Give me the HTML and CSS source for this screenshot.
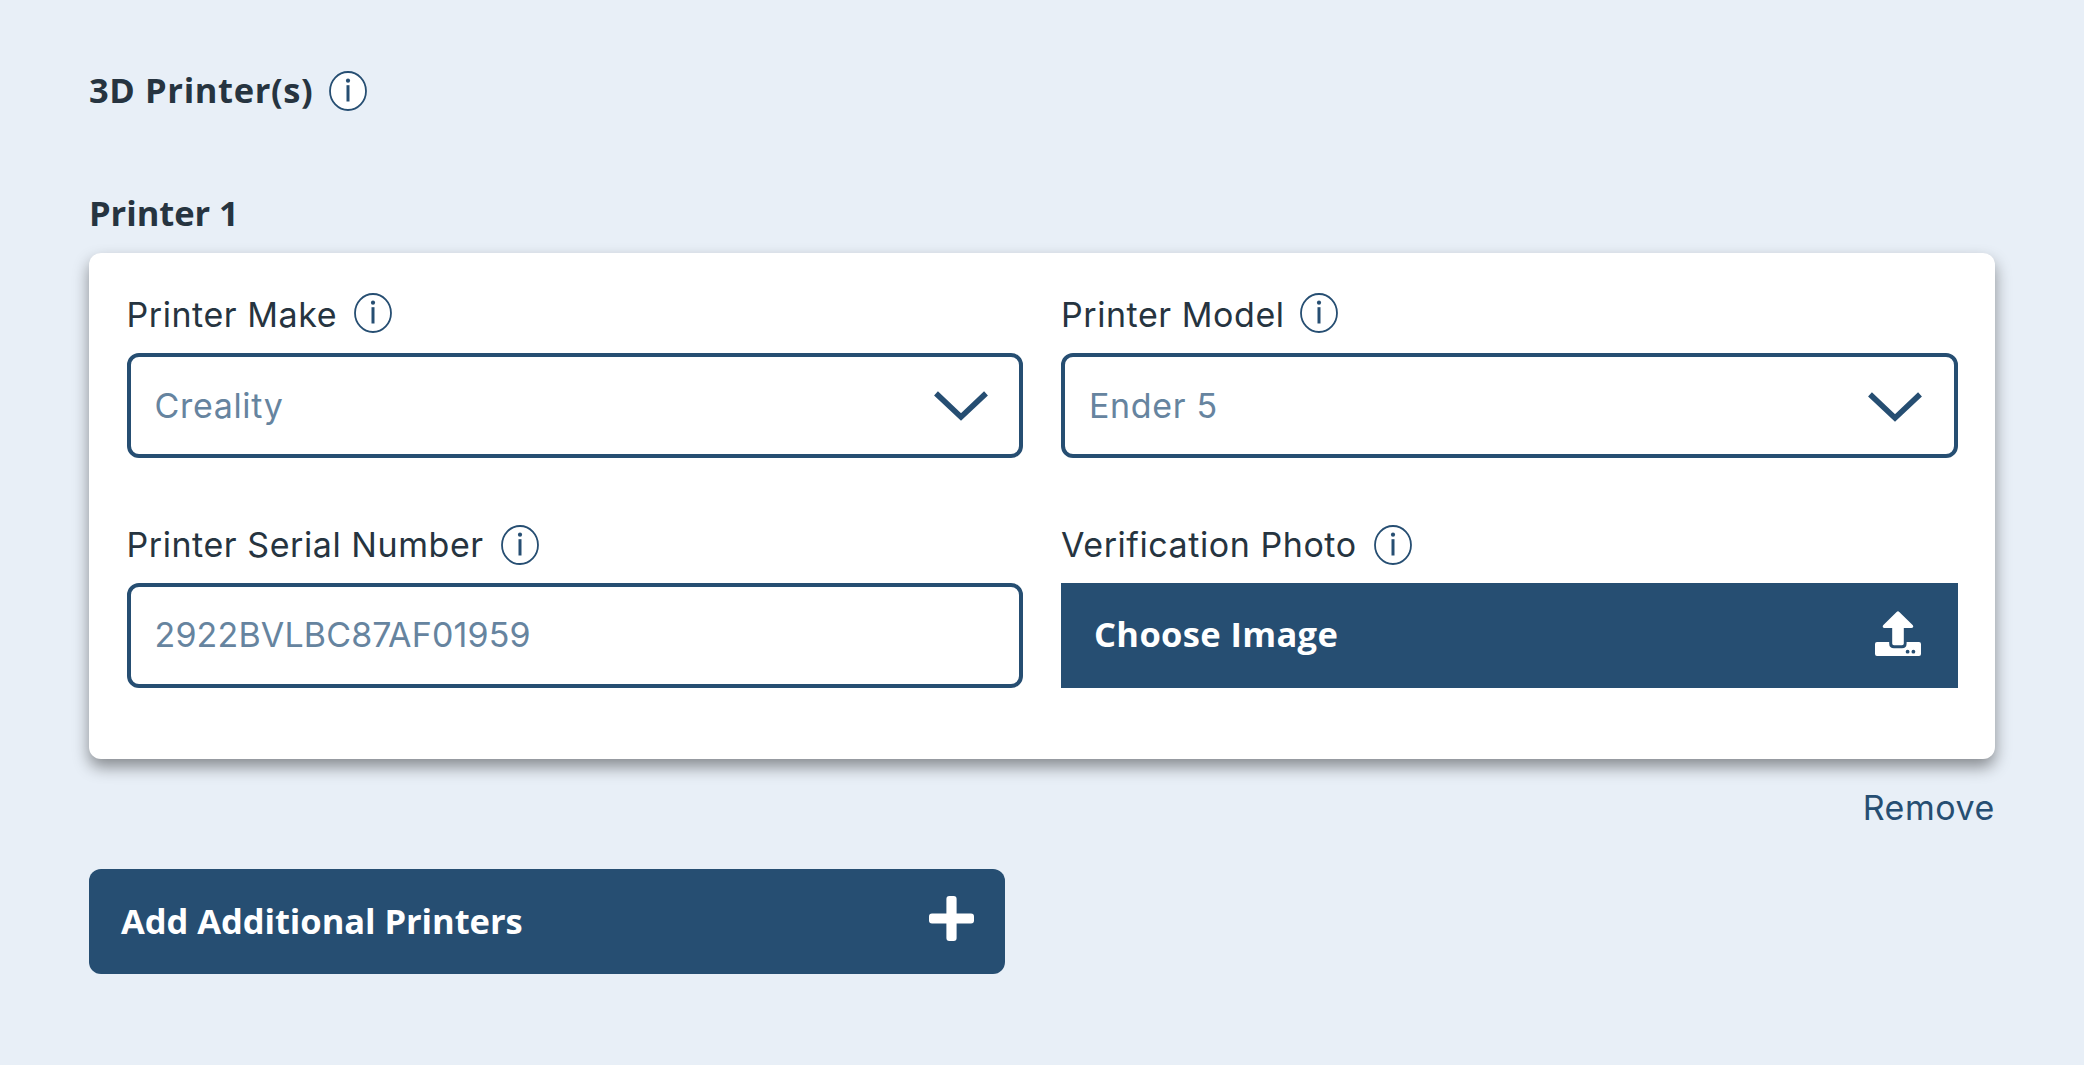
FILE: index.html
```
<!DOCTYPE html>
<html lang="en">
<head>
  <meta charset="utf-8">
  <title>3D Printer(s)</title>
  <link rel="stylesheet" href="styles.css">
</head>
<body>
  <svg width="0" height="0" class="sprite" aria-hidden="true">
    <symbol id="info" viewBox="0 0 38 40">
      <ellipse cx="19" cy="20" rx="18" ry="19" fill="#fff" stroke="#264e72" stroke-width="1.8"/>
      <circle cx="19" cy="9.7" r="2.1" fill="#264e72"/>
      <rect x="17.5" y="14.2" width="3" height="16.3" fill="#264e72"/>
    </symbol>
    <symbol id="chevron" viewBox="0 0 54 30">
      <polyline points="2,2.4 27,26 52,2.4" fill="none" stroke="#264e72" stroke-width="5.6"/>
    </symbol>
  </svg>

  <main class="page">
    <header class="title-row">
      <h1 class="title">3D Printer(s)</h1>
      <svg class="info"><use href="#info"/></svg>
    </header>

    <h2 class="subtitle">Printer 1</h2>

    <section class="card">
      <div class="field">
        <div class="label label-upper"><span>Printer Make</span><svg class="info"><use href="#info"/></svg></div>
        <div class="control select">
          <span class="value">Creality</span>
          <svg class="chevron"><use href="#chevron"/></svg>
        </div>
      </div>
      <div class="field">
        <div class="label label-upper label-model"><span>Printer Model</span><svg class="info"><use href="#info"/></svg></div>
        <div class="control select select-model">
          <span class="value">Ender 5</span>
          <svg class="chevron"><use href="#chevron"/></svg>
        </div>
      </div>
      <div class="field field-lower">
        <div class="label"><span>Printer Serial Number</span><svg class="info"><use href="#info"/></svg></div>
        <div class="control">
          <span class="value serial">2922BVLBC87AF01959</span>
        </div>
      </div>
      <div class="field field-lower">
        <div class="label"><span>Verification Photo</span><svg class="info"><use href="#info"/></svg></div>
        <button class="button choose">
          <span>Choose Image</span>
          <svg class="upload" viewBox="0 0 46 46" fill="#fff">
            <path d="M2 31H14.2V32.5Q14.2 37.2 19 37.2H27Q31.6 37.2 31.6 32.5V31H44Q46 31 46 33V43Q46 45 44 45H2Q0 45 0 43V33Q0 31 2 31Z"/>
            <path d="M21.6 0.9Q23 -0.4 24.3 0.9L37.6 14Q38.6 15.2 38 16.2Q37.6 17 36.4 17H28.8V32.4Q28.8 34.2 27 34.2H19Q17.2 34.2 17.2 32.4V17H9.4Q8.3 17 7.9 16.2Q7.4 15.2 8.4 14Z"/>
            <circle cx="32.6" cy="40.7" r="1.9" fill="#264e72"/>
            <circle cx="38.4" cy="40.7" r="1.9" fill="#264e72"/>
          </svg>
        </button>
      </div>
    </section>

    <a class="remove">Remove</a>

    <button class="button add">
      <span>Add Additional Printers</span>
      <svg class="plus" viewBox="0 0 45 45" fill="#fff">
        <rect x="17.4" y="0" width="10.2" height="45" rx="3"/>
        <rect x="0" y="17.4" width="45" height="10.2" rx="3"/>
      </svg>
    </button>
  </main>
</body>
</html>
```
FILE: styles.css
```
* {
  box-sizing: border-box;
}

body {
  margin: 0;
  background: #e8eff7;
  color: #263440;
  font: 400 34px/40px Inter, "Liberation Sans", sans-serif;
  letter-spacing: 0.56px;
}

.sprite {
  display: block;
}

.page {
  display: flex;
  flex-direction: column;
  padding: 71px 89px 0;
}

.title-row,
.label {
  display: flex;
  align-items: flex-start;
  height: 40px;
  white-space: nowrap;
}

.title-row {
  gap: 16px;
}

.label {
  gap: 17.5px;
}

.label-upper {
  gap: 16.5px;
}

.label-model {
  gap: 15.5px;
}

.label-upper span {
  padding-top: 2px;
}

.title,
.subtitle {
  margin: 0;
  font: 700 34.5px/40px "Open Sans", "Noto Sans", sans-serif;
}

.title {
  line-height: 38px;
  letter-spacing: 0.62px;
}

.subtitle {
  margin-top: 82px;
  letter-spacing: -0.05px;
}

.info {
  width: 38px;
  height: 40px;
  flex: none;
}

.card {
  display: grid;
  grid-template-columns: 1fr 1fr;
  gap: 67px 38px;
  height: 506px;
  margin-top: 20px;
  padding: 40px 37.5px 71px;
  border-radius: 12px;
  background: #fff;
  box-shadow: 0 8px 16px rgba(0, 0, 0, 0.42);
}

.field {
  display: flex;
  flex-direction: column;
  gap: 20px;
}

.field-lower {
  gap: 18px;
}

.control {
  display: flex;
  align-items: center;
  justify-content: space-between;
  height: 105px;
  padding: 0 31.5px 0 24px;
  border: 4px solid #264e72;
  border-radius: 12px;
}

.value {
  color: #66849f;
  letter-spacing: 0.66px;
}

.select .value {
  padding-top: 1px;
}

.value.serial {
  padding-bottom: 2px;
  letter-spacing: 0.15px;
}

.chevron {
  width: 54px;
  height: 30px;
}

.select-model .chevron {
  margin-top: 2px;
}

.button {
  display: flex;
  align-items: center;
  justify-content: space-between;
  height: 105px;
  border: 0;
  background: #264e72;
  color: #fff;
  font: 700 34.5px/40px "Open Sans", "Noto Sans", sans-serif;
}

.choose {
  padding: 0 36.5px 0 33px;
  letter-spacing: 0.36px;
}

.choose span {
  padding-bottom: 4px;
}

.upload {
  width: 46px;
  height: 46px;
  margin-bottom: 3px;
}

.remove {
  align-self: flex-end;
  margin-top: 29px;
  color: #264e72;
}

.add {
  width: 916px;
  margin-top: 41px;
  padding: 0 31px 0 32px;
  border-radius: 12px;
  letter-spacing: -0.06px;
}

.add span {
  padding-bottom: 1px;
}

.plus {
  width: 45px;
  height: 45px;
  margin-bottom: 6px;
}
```
